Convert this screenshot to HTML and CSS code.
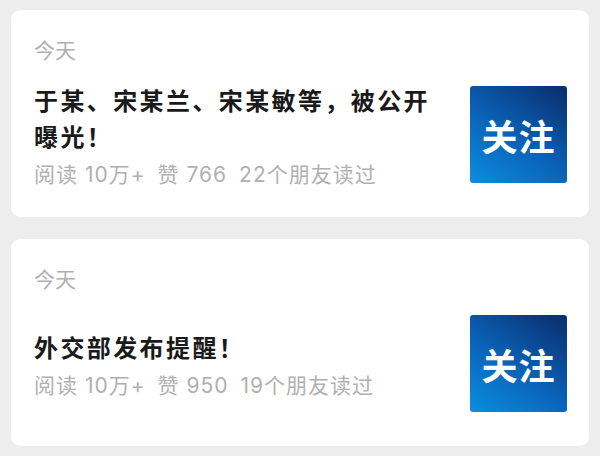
FILE: index.html
```html
<!DOCTYPE html>
<html lang="zh-CN">
  <head>
    <meta charset="UTF-8" />
    <meta name="viewport" content="width=device-width, initial-scale=1.0" />
    <title>文章列表</title>
    <link rel="stylesheet" href="styles.css">
  </head>
  <body>
    <div class="list">
      <div class="card">
        <div class="date">今天</div>
        <div class="row">
          <div class="info">
            <div class="title">于某、宋某兰、宋某敏等，被公开曝光！</div>
            <div class="meta">
              <span>阅读 10万+</span>
              <span>赞 766</span>
              <span>22个朋友读过</span>
            </div>
          </div>
          <div class="thumb">关注</div>
        </div>
      </div>

      <div class="card">
        <div class="date">今天</div>
        <div class="row">
          <div class="info">
            <div class="title">外交部发布提醒！</div>
            <div class="meta">
              <span>阅读 10万+</span>
              <span>赞 950</span>
              <span>19个朋友读过</span>
            </div>
          </div>
          <div class="thumb">关注</div>
        </div>
      </div>
    </div>
  </body>
</html>
```

FILE: styles.css
```css
body{
  margin: 0;
  background-color: #ededed;
  font-family: "Noto Sans CJK SC", "Noto Sans", sans-serif;
}
.list{
  padding: 10px 11px;
  display: flex;
  flex-direction: column;
  gap: 22px;
}
.card{
  background-color: #fff;
  border-radius: 9px;
  padding: 26px 22px 29px 23px;
}
.date{
  font-size: 21px;
  line-height: 26px;
  color: #b0b0b0;
}
.row{
  margin-top: 19px;
  display: flex;
  align-items: center;
  gap: 30px;
}
.info{
  flex: 1;
}
.title{
  font-size: 24px;
  line-height: 36px;
  font-weight: 700;
  letter-spacing: 2.4px;
  color: #1a1a1a;
}
.meta{
  margin-top: 8px;
  font-family: Inter, "Noto Sans CJK SC", sans-serif;
  font-size: 21px;
  line-height: 26px;
  letter-spacing: 1px;
  color: #b0b0b0;
  display: flex;
  gap: 12px;
}
.thumb{
  width: 97px;
  height: 97px;
  margin: 5px 0;
  flex-shrink: 0;
  border-radius: 3px;
  background: linear-gradient(35deg, #0b8ee0 0%, #0a63b8 45%, #0a2c6c 100%);
  color: #fff;
  font-size: 36px;
  font-weight: 700;
  display: flex;
  align-items: center;
  justify-content: center;
  letter-spacing: 1px;
}
```
